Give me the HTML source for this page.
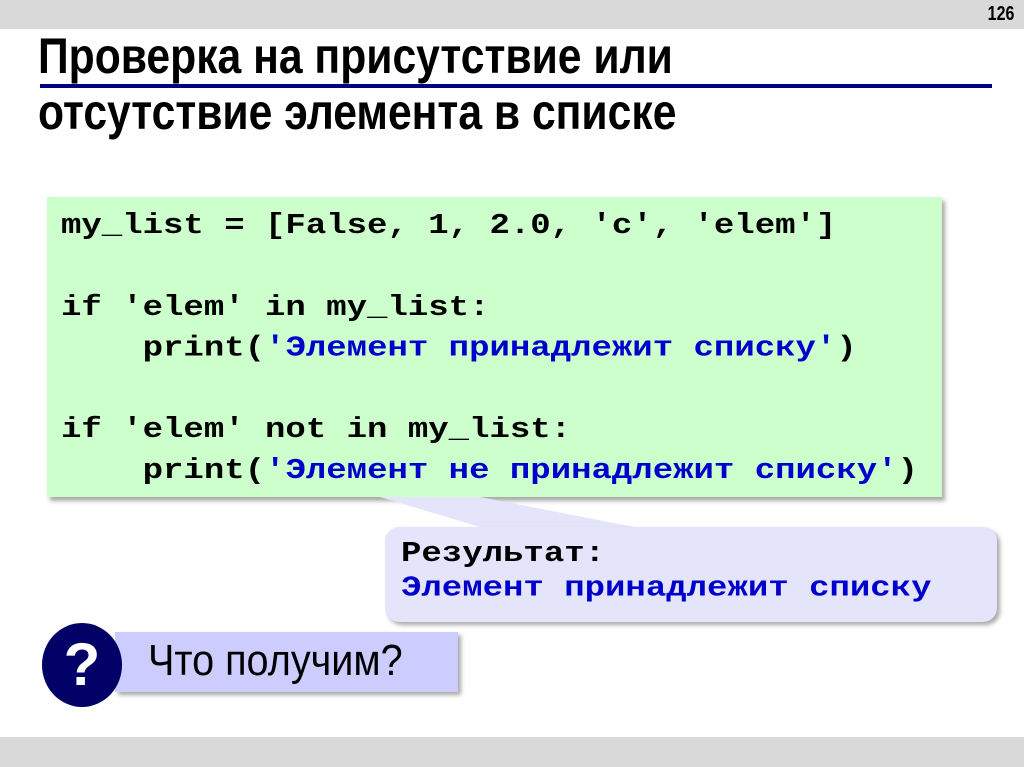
<!DOCTYPE html>
<html><head><meta charset="utf-8"><style>
body{margin:0;width:1024px;height:767px;background:#fff;position:relative;overflow:hidden;font-family:"Liberation Sans",sans-serif}
.top{position:absolute;left:0;top:0;width:1024px;height:29px;background:#d9d9d9}
.bot{position:absolute;left:0;top:737px;width:1024px;height:30px;background:#d9d9d9}
.num{position:absolute;right:10px;top:3px;font:bold 20px "Liberation Sans",sans-serif;transform:scaleX(.8);transform-origin:100% 0}
.t{position:absolute;left:38px;font:bold 50px "Liberation Sans",sans-serif;color:#000;white-space:nowrap;transform:scaleX(.853);transform-origin:0 0}
.line{position:absolute;left:40px;top:84px;width:952px;height:4px;background:#000080}
.code{position:absolute;left:47px;top:197px;width:895px;height:300px;background:#ccffcc;box-shadow:3px 4px 4px #aaa}
pre{margin:0;font:bold 34px/41px "Liberation Mono",monospace;position:absolute;left:61px;top:204px;transform:scaleY(0.85);transform-origin:0 0;white-space:pre}
.s{color:#0000cc}
.call{position:absolute;left:385px;top:527px;width:612px;height:95px;background:#e4e4fa;border-radius:14px;box-shadow:3px 3px 4px #aaa}
.q{position:absolute;left:115px;top:632px;width:343px;height:60px;background:#ccccff;box-shadow:3px 3px 4px #aaa}
.qt{position:absolute;left:148px;top:636px;font:44px "Liberation Sans",sans-serif;transform:scaleX(.9);transform-origin:0 0;white-space:nowrap}
.c{position:absolute;left:42px;top:623px;width:80px;height:84px;border-radius:50%;background:#000066;color:#fff;font:bold 60px "Liberation Sans",sans-serif;text-align:center;line-height:84px}
</style></head><body>
<div class="top"></div><div class="num">126</div>
<div class="t" style="top:27px">Проверка на присутствие или</div>
<div class="line"></div>
<div class="t" style="top:83px">отсутствие элемента в списке</div>
<div class="code"></div>
<pre style="top:206px;line-height:48px">my_list = [False, 1, 2.0, 'c', 'elem']

if 'elem' in my_list:
    print(<span class="s">'Элемент принадлежит списку'</span>)

if 'elem' not in my_list:
    print(<span class="s">'Элемент не принадлежит списку'</span>)</pre>
<svg style="position:absolute;left:0;top:0" width="1024" height="767"><polygon points="380,497 480,497 650,530 490,530" fill="#e4e4fa"/></svg>
<div class="call"></div>
<pre style="left:401px;top:537px">Результат:
<span class="s">Элемент принадлежит списку</span></pre>
<div class="q"></div><div class="qt">Что получим?</div>
<div class="c">?</div>
<div class="bot"></div>
</body></html>
